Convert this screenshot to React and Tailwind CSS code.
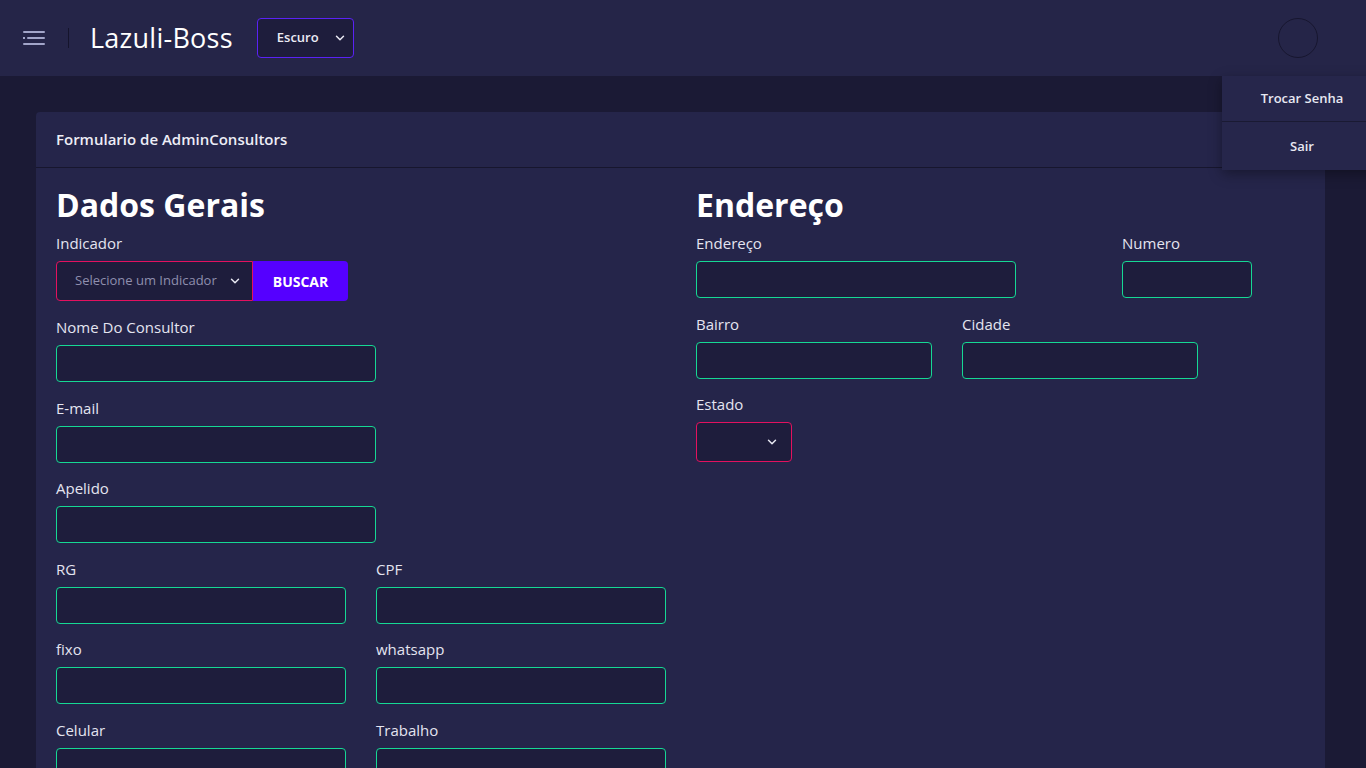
import { ChevronDown } from "lucide-react"

function Label({ children }) {
  return <div className="text-[15px] leading-[22px] text-[#e4e4f0] mb-[7px]">{children}</div>
}

function Field({ label, width }) {
  return (
    <div className="mb-[14.5px]">
      <Label>{label}</Label>
      <input className={`${width} h-[37px] block rounded-[4px] border border-[#16d894] bg-[#1e1d3c] outline-none`} />
    </div>
  )
}

function Menu() {
  return (
    <div className="absolute left-[1222px] top-[76px] w-[160px] bg-[#26264b] shadow-[0_4px_12px_rgba(0,0,0,0.35)] text-[13px] font-semibold text-[#e8e8f2] z-10">
      <div className="h-[45px] flex items-center justify-center pt-[1px]">Trocar Senha</div>
      <div className="h-px bg-[#1a1a33]" />
      <div className="h-[48px] flex items-center justify-center pt-[1px]">Sair</div>
    </div>
  )
}

export default function App() {
  return (
    <div className="min-h-[768px] bg-[#1b1a35] font-['Open_Sans',sans-serif] relative overflow-hidden">
      <header className="h-[76px] bg-[#252548] flex items-center pl-[23px] pr-[48px]">
        <svg width="22" height="14" viewBox="0 0 22 14">
          <rect x="0" y="0" width="22" height="2" rx="1" fill="#a2a5c9" />
          <rect x="0" y="6" width="2" height="2" fill="#a2a5c9" />
          <rect x="4" y="6" width="18" height="2" rx="1" fill="#a2a5c9" />
          <rect x="0" y="12" width="22" height="2" rx="1" fill="#a2a5c9" />
        </svg>
        <div className="w-px h-5 bg-[#15142c] ml-[23px]" />
        <div className="ml-[21px] text-[27px] font-normal text-white tracking-[0.25px]">Lazuli-Boss</div>
        <button className="ml-[24px] w-[97px] h-10 rounded-[4px] border border-[#5a22f5] bg-[#1e1d3c] flex items-center pl-[19px] text-[13px] font-semibold text-[#ecebf5]">
          Escuro
          <ChevronDown size={14} strokeWidth={2.5} className="ml-[14px]" />
        </button>
        <div className="ml-auto w-10 h-10 rounded-full border border-[#17162f]" />
      </header>
      <Menu />

      <main className="pt-9 pl-9 pr-[41px]">
        <div className="bg-[#25254a] rounded-t-[4px] min-h-[656px]">
          <div className="h-[56px] flex items-center px-5 border-b border-[#17162e] text-[15px] font-semibold text-[#ededf6]">
            Formulario de AdminConsultors
          </div>
          <div className="px-5 pt-[18px] grid grid-cols-2 gap-x-[31px]">
            <div>
              <h1 className="text-[32px] leading-[38px] font-bold text-white mb-[8px]">Dados Gerais</h1>
              <div className="mb-[15px]">
                <Label>Indicador</Label>
                <div className="flex">
                  <div className="w-[197px] h-10 rounded-l-[4px] border border-[#e3115f] bg-[#1e1d3c] flex items-center pl-[18px] pr-[10px] text-[13px] text-[#8f8fae]">
                    Selecione um Indicador
                    <ChevronDown size={14} strokeWidth={2.5} className="ml-auto text-[#e8e8f2]" />
                  </div>
                  <button className="w-[95px] h-10 rounded-r-[4px] bg-[#5500ff] text-white font-bold text-[14px]">BUSCAR</button>
                </div>
              </div>
              <Field label="Nome Do Consultor" width="w-[320px]" />
              <Field label="E-mail" width="w-[320px]" />
              <Field label="Apelido" width="w-[320px]" />
              <div className="grid grid-cols-[290px_290px] gap-x-[30px]">
                <Field label="RG" width="w-[290px]" />
                <Field label="CPF" width="w-[290px]" />
                <Field label="fixo" width="w-[290px]" />
                <Field label="whatsapp" width="w-[290px]" />
                <Field label="Celular" width="w-[290px]" />
                <Field label="Trabalho" width="w-[290px]" />
              </div>
            </div>
            <div>
              <h1 className="text-[32px] leading-[38px] font-bold text-white mb-[8px]">Endereço</h1>
              <div className="flex">
                <Field label="Endereço" width="w-[320px]" />
                <div className="ml-[106px]">
                  <Field label="Numero" width="w-[130px]" />
                </div>
              </div>
              <div className="flex gap-x-[30px]">
                <Field label="Bairro" width="w-[236px]" />
                <Field label="Cidade" width="w-[236px]" />
              </div>
              <div>
                <Label>Estado</Label>
                <div className="w-[96px] h-10 rounded-[4px] border border-[#e3115f] bg-[#1e1d3c] flex items-center justify-end pr-[12px] text-[#e8e8f2]">
                  <ChevronDown size={14} strokeWidth={2.5} />
                </div>
              </div>
            </div>
          </div>
        </div>
      </main>
    </div>
  )
}
